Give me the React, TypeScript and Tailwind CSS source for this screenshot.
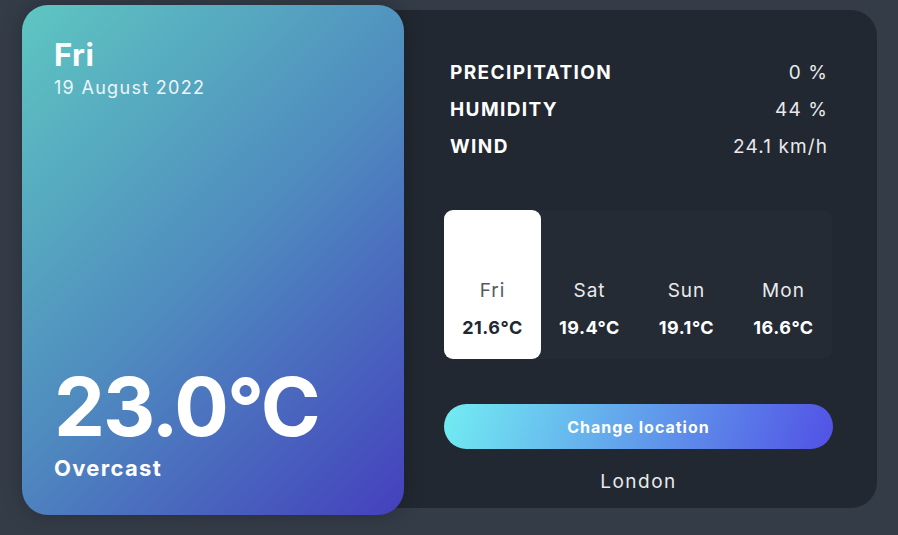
import React from "react";

const forecast = [
  { day: "Fri", temp: "21.6°C", active: true },
  { day: "Sat", temp: "19.4°C", active: false },
  { day: "Sun", temp: "19.1°C", active: false },
  { day: "Mon", temp: "16.6°C", active: false },
];

const stats = [
  { label: "PRECIPITATION", value: "0 %" },
  { label: "HUMIDITY", value: "44 %" },
  { label: "WIND", value: "24.1 km/h" },
];

const WeatherCard: React.FC = () => (
  <div className="relative z-10 flex h-[510px] w-[382px] shrink-0 flex-col justify-between rounded-[26px] bg-[linear-gradient(135deg,#5ec6c1_0%,#4f8cbf_50%,#4440bd_100%)] px-8 pb-[34px] pt-[33px] text-white shadow-[0_0_20px_rgba(0,0,0,0.25)]">
    <div>
      <div className="text-[31px] font-bold leading-[34px] tracking-[0.5px]">Fri</div>
      <div className="mt-[5px] text-[18px] leading-[22px] tracking-[1.3px] text-[#eef4f8]">19 August 2022</div>
    </div>
    <div>
      <div className="text-[81px] font-bold leading-[86px] tracking-[-2px]">23.0°C</div>
      <div className="mt-[5px] text-[22px] font-bold leading-[26px] tracking-[1.3px]">Overcast</div>
    </div>
  </div>
);

const DetailsPanel: React.FC = () => (
  <div className="-ml-6 mt-[5px] flex h-[498px] w-[497px] flex-col rounded-r-[26px] bg-[#222831] pl-[70px] pr-[50px] pt-[52px] text-white">
    <div className="flex shrink-0 flex-col gap-[15px]">
      {stats.map((s) => (
        <div key={s.label} className="flex items-center justify-between text-[19px] leading-[22px]">
          <span className="font-bold tracking-[1.4px]">{s.label}</span>
          <span className="-mr-[1px] tracking-[1.1px] text-[#e8eaec]">{s.value}</span>
        </div>
      ))}
    </div>

    <div className="-ml-[6px] mt-[52px] flex h-[149px] w-[388px] shrink-0 rounded-[10px] bg-[#252b34]">
      {forecast.map((f) => (
        <div
          key={f.day}
          className={
            f.active
              ? "flex w-[97px] flex-col items-center justify-end rounded-[9px] bg-white pb-[20px] text-[#222831]"
              : "flex w-[97px] flex-col items-center justify-end pb-[20px] text-white"
          }
        >
          <span
            className={
              f.active
                ? "text-[19px] leading-[22px] tracking-[1px] text-[#555b63]"
                : "text-[19px] leading-[22px] tracking-[1px] text-[#e8eaec]"
            }
          >
            {f.day}
          </span>
          <span className="mt-[15px] text-[18px] font-bold leading-[22px] tracking-[0.5px]">{f.temp}</span>
        </div>
      ))}
    </div>

    <button className="-ml-[6px] mt-[45px] h-[45px] w-[389px] shrink-0 rounded-full bg-[linear-gradient(110deg,#72edf2_0%,#5151e5_100%)] text-[16px] font-bold tracking-[1px] text-white">
      Change location
    </button>
    <div className="-ml-[6px] mt-[22px] w-[389px] shrink-0 text-center text-[19px] leading-[22px] tracking-[1.5px] text-[#e8eaec]">
      London
    </div>
  </div>
);

export default function App() {
  return (
    <div
      className="flex h-[535px] w-[898px] items-start bg-[#343c48] pl-[22px] pt-[5px]"
      style={{ fontFamily: "Inter, 'Noto Sans', sans-serif" }}
    >
      <WeatherCard />
      <DetailsPanel />
    </div>
  );
}
